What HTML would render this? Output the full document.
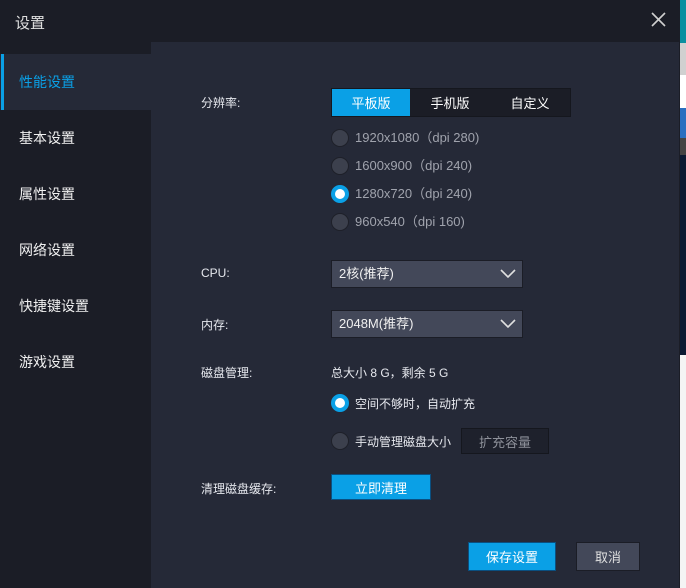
<!DOCTYPE html>
<html><head><meta charset="utf-8"><style>
*{margin:0;padding:0;box-sizing:border-box}
body{width:686px;height:588px;position:relative;overflow:hidden;background:#252937;font-family:"Liberation Sans","Noto Sans CJK SC",sans-serif;font-size:13px;color:#e6e8ee}
.a{position:absolute}
.rs{position:absolute;left:680px;width:6px}
.nav{position:absolute;left:19px;font-size:14px;color:#f0f0f0}
.lbl{position:absolute;left:201px;font-size:12px;color:#e6e8ee}
.r{position:absolute;left:331px;width:18px;height:18px;border-radius:50%;background:#3c404d;border:1px solid #1e2029}
.r.on{background:#fff;border:4px solid #0aa0e6}
.rt{position:absolute;left:355px;font-size:13px;color:#a0a3ad;line-height:16px}
.sel{position:absolute;left:331px;width:192px;height:28px;background:#434859;border:1px solid #1b1d26;color:#f0f0f0;font-size:13px;line-height:26px;padding-left:7px}
.sel svg{position:absolute;right:6px;top:8px}
.btn{position:absolute;text-align:center;font-size:13px;color:#fff;display:flex;align-items:center;justify-content:center}
</style></head><body>
<div class="a" style="left:0;top:0;width:680px;height:42px;background:#1b1d26"></div>
<div class="a" style="left:15px;top:12px;font-size:15px;color:#e0e0e0">设置</div>
<svg class="a" style="left:651px;top:12px" width="15" height="15"><path d="M1 1L14 14M14 1L1 14" stroke="#d0d0d0" stroke-width="1.6"/></svg>
<div class="a" style="left:0;top:42px;width:151px;height:546px;background:#1b1d26"></div>
<div class="a" style="left:0;top:54px;width:151px;height:56px;background:#252937"></div>
<div class="a" style="left:1px;top:54px;width:3px;height:56px;background:#0aa0e6"></div>
<div class="nav" style="top:72px;color:#0aa0e6">性能设置</div>
<div class="nav" style="top:128px">基本设置</div>
<div class="nav" style="top:184px">属性设置</div>
<div class="nav" style="top:240px">网络设置</div>
<div class="nav" style="top:296px">快捷键设置</div>
<div class="nav" style="top:352px">游戏设置</div>

<div class="rs" style="top:0;height:43px;background:#0a8fa0"></div>
<div class="rs" style="top:43px;height:32px;background:#d0d0d0"></div>
<div class="rs" style="top:75px;height:33px;background:#fff"></div>
<div class="rs" style="top:108px;height:30px;background:#2a6fc0"></div>
<div class="rs" style="top:138px;height:17px;background:#444"></div>
<div class="rs" style="top:155px;height:200px;background:#0b1a33"></div>
<div class="rs" style="top:355px;height:233px;background:#f4f4f4"></div>
<div class="a" style="left:679px;top:0;width:1px;height:588px;background:#1b1d26"></div>

<div class="lbl" style="top:94px">分辨率:</div>
<div class="a" style="left:331px;top:88px;width:240px;height:29px;background:#1b1d26;border:1px solid #15171e"></div>
<div class="btn" style="left:332px;top:89px;width:78px;height:27px;background:#0aa0e6">平板版</div>
<div class="btn" style="left:410px;top:89px;width:80px;height:27px">手机版</div>
<div class="btn" style="left:490px;top:89px;width:80px;height:27px">自定义</div>

<div class="r" style="top:129px"></div><div class="rt" style="top:130px">1920x1080（dpi 280)</div>
<div class="r" style="top:157px"></div><div class="rt" style="top:158px">1600x900（dpi 240)</div>
<div class="r on" style="top:185px"></div><div class="rt" style="top:186px">1280x720（dpi 240)</div>
<div class="r" style="top:213px"></div><div class="rt" style="top:214px">960x540（dpi 160)</div>

<div class="lbl" style="top:266px">CPU:</div>
<div class="sel" style="top:260px">2核(推荐)<svg width="16" height="10"><path d="M1 1L8 8L15 1" stroke="#e0e0e0" stroke-width="1.6" fill="none"/></svg></div>
<div class="lbl" style="top:316px">内存:</div>
<div class="sel" style="top:310px">2048M(推荐)<svg width="16" height="10"><path d="M1 1L8 8L15 1" stroke="#e0e0e0" stroke-width="1.6" fill="none"/></svg></div>

<div class="lbl" style="top:364px">磁盘管理:</div>
<div class="a" style="left:331px;top:364px;font-size:12px">总大小 8 G，剩余 5 G</div>
<div class="r on" style="top:394px"></div><div class="a" style="left:355px;top:395px;font-size:12px">空间不够时，自动扩充</div>
<div class="r" style="top:432px"></div><div class="a" style="left:355px;top:433px;font-size:12px">手动管理磁盘大小</div>
<div class="btn" style="left:461px;top:428px;width:88px;height:26px;background:#1e212c;border:1px solid #15171e;color:#8e919a">扩充容量</div>

<div class="lbl" style="top:480px">清理磁盘缓存:</div>
<div class="btn" style="left:331px;top:474px;width:100px;height:26px;background:#0aa0e6;border:1px solid #0a4f80">立即清理</div>

<div class="btn" style="left:468px;top:542px;width:88px;height:29px;background:#0aa0e6;border:1px solid #0a4f80">保存设置</div>
<div class="btn" style="left:576px;top:542px;width:64px;height:29px;background:#434859;border:1px solid #1b1d26;color:#e0e0e0">取消</div>
</body></html>
